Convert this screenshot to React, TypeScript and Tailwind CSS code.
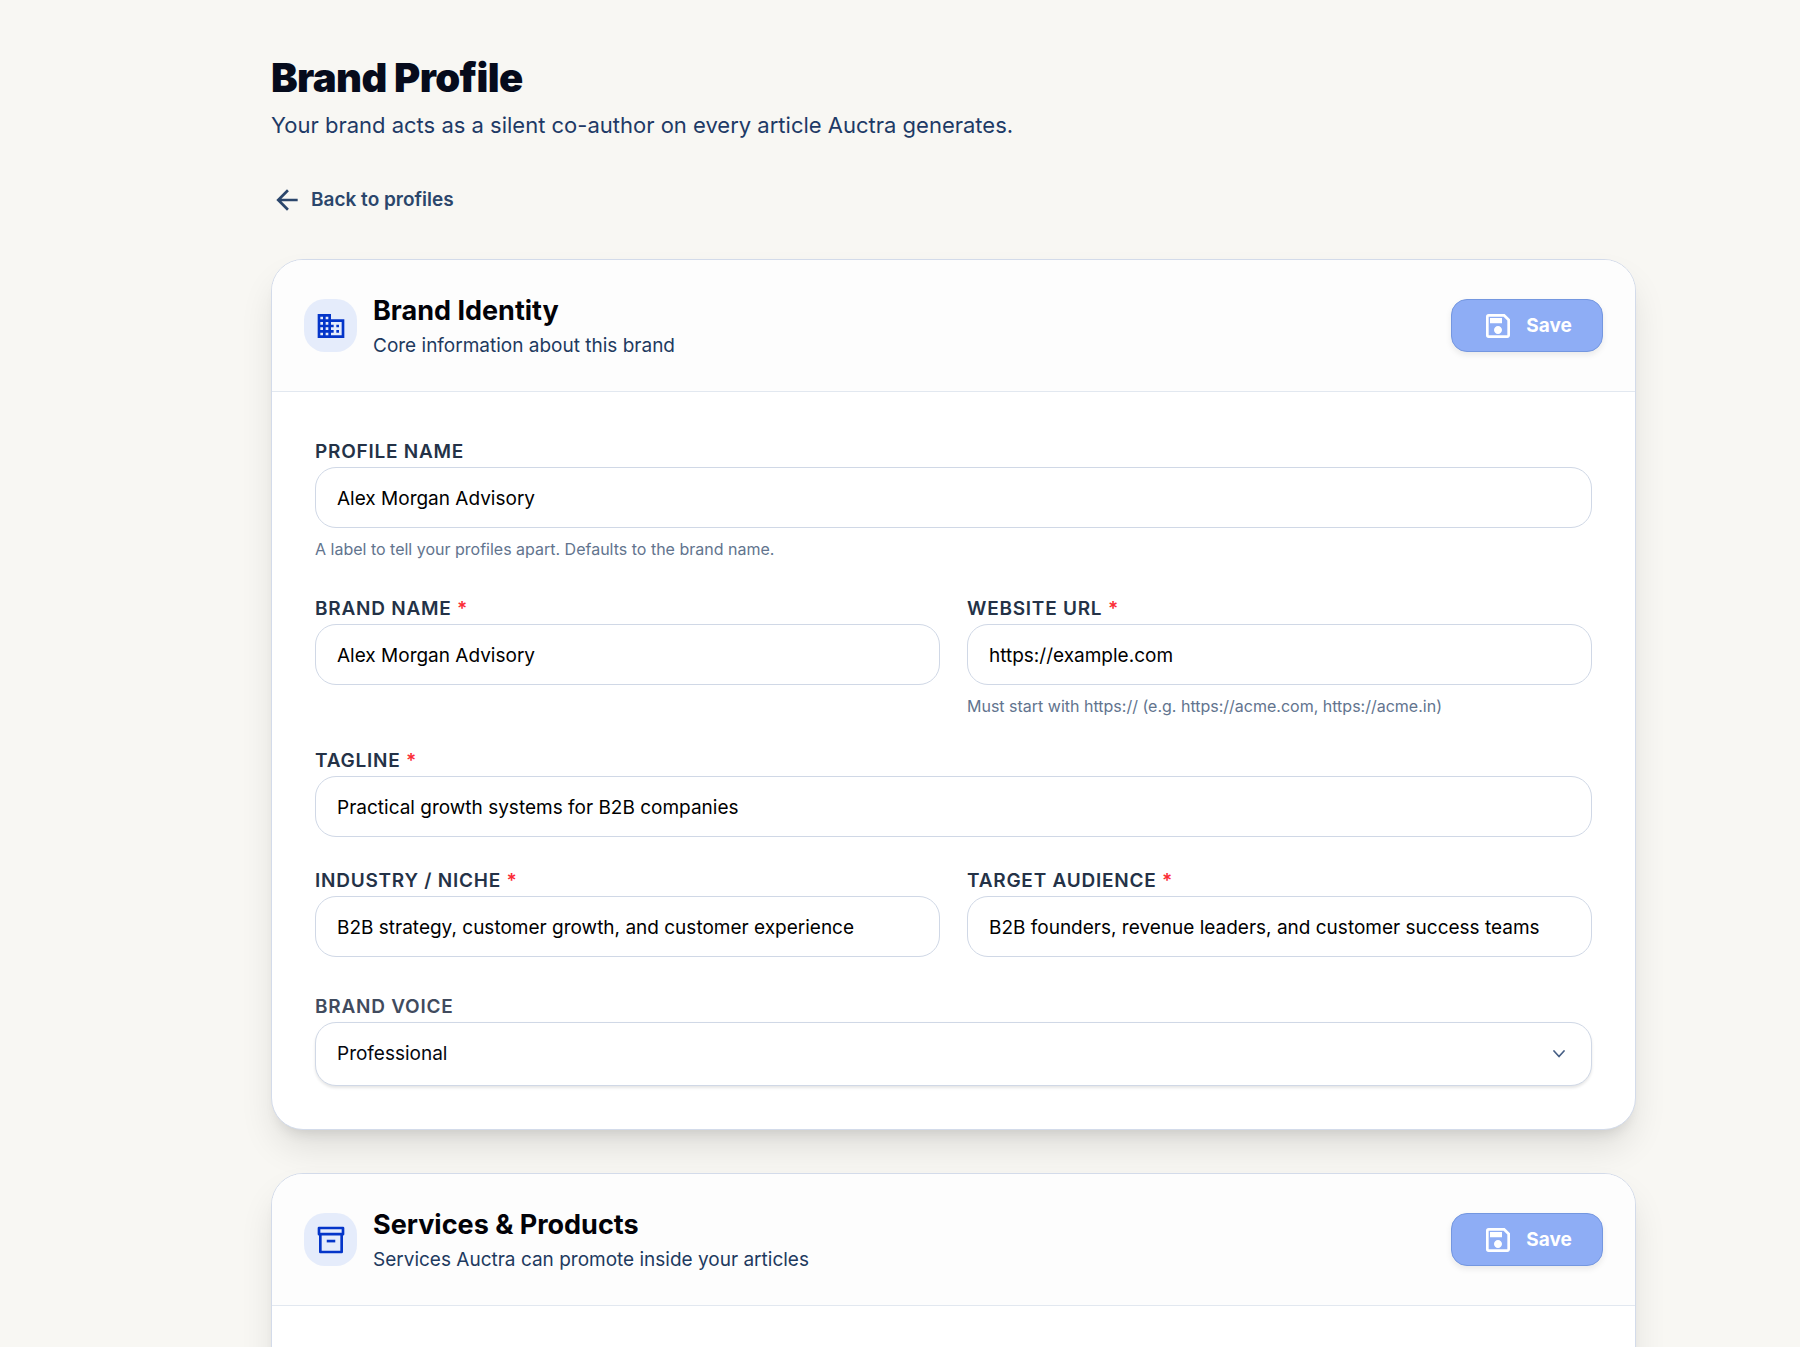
import type { ReactNode } from "react";
import { MdArrowBack, MdDomain, MdOutlineSave } from "react-icons/md";

type FieldProps = {
  id: string;
  label: string;
  value: string;
  required?: boolean;
  hint?: string;
  type?: string;
};

function Field({ id, label, value, required, hint, type = "text" }: FieldProps) {
  return (
    <div>
      <label htmlFor={id} className="block pt-0.5 text-[19px] leading-[30px] font-semibold tracking-[0.04em] text-[#243247] uppercase">
        {label}
        {required && <span className="text-red-500"> *</span>}
      </label>
      <input
        id={id}
        type={type}
        defaultValue={value}
        aria-describedby={hint ? `${id}-hint` : undefined}
        className="block h-[61px] w-full rounded-[21px] border border-[#d0d8e6] bg-white px-[21px] pt-px text-[19px] text-black outline-none focus:border-blue-500"
      />
      {hint && (
        <p id={`${id}-hint`} className="mt-2 text-[16px] leading-[26px] text-slate-500">
          {hint}
        </p>
      )}
    </div>
  );
}

function ArchiveIcon() {
  return (
    <svg viewBox="0 0 24 24" aria-hidden="true" className="size-8 fill-none stroke-current">
      <path d="M3 3h18v4.6H3zM4 7.6V21h16V7.6" strokeWidth="2" strokeLinejoin="round" />
      <path d="M8.8 12.8h6.4" strokeWidth="2" />
    </svg>
  );
}

type SectionProps = {
  icon: ReactNode;
  title: string;
  description: string;
  children?: ReactNode;
};

function Section({ icon, title, description, children }: SectionProps) {
  return (
    <section className="rounded-[32px] border border-[#d3dbea] bg-white shadow-[0_20px_36px_-4px_rgba(0,0,0,0.11),0_10px_13px_-7px_rgba(0,0,0,0.1)]">
      <header className="flex items-center justify-between rounded-t-[31px] border-b border-slate-200 bg-[#fdfdfd] px-8 py-7">
        <div className="flex items-center gap-4">
          <span className="flex size-[53px] items-center justify-center rounded-[21px] bg-[#e5ecfb] text-[#0435c9]">
            {icon}
          </span>
          <div className="pt-[7px]">
            <h2 className="text-[27px] leading-8 font-bold text-[#020208]">{title}</h2>
            <p className="pt-0.5 text-[19px] leading-[34px] text-[#1e3a5f]">{description}</p>
          </div>
        </div>
        <button
          type="button"
          className="flex h-[53px] w-[152px] items-center justify-center gap-3 rounded-2xl border border-[#7497e0] bg-[#8eadf5] text-[19px] font-bold text-white shadow-[0_3px_6px_rgba(0,0,0,0.08)]"
        >
          <MdOutlineSave className="size-8" />
          <span className="pt-px">Save</span>
        </button>
      </header>
      {children}
    </section>
  );
}

export default function App() {
  return (
    <div className="h-screen overflow-hidden bg-[#f8f7f3] pt-[54px] pr-[164px] pl-[271px] font-['Inter',sans-serif]">
      <h1 className="text-[40px] leading-[48px] font-black tracking-[-0.6px] text-[#060b1c]">Brand Profile</h1>
      <p className="mt-1.5 text-[22px] leading-[34px] text-[#1e3a66]">
        Your brand acts as a silent co-author on every article Auctra generates.
      </p>
      <a href="#profiles" className="mt-[42px] flex w-fit items-center gap-2 text-[19px] leading-8 font-semibold text-[#2b466b]">
        <MdArrowBack className="size-8" />
        Back to profiles
      </a>

      <main className="mt-[43px] flex flex-col gap-[43px]">
        <Section icon={<MdDomain className="size-8" />} title="Brand Identity" description="Core information about this brand">
          <div className="px-[43px] pt-[43px] pb-[43px]">
            <Field
              id="profile-name"
              label="Profile name"
              value="Alex Morgan Advisory"
              hint="A label to tell your profiles apart. Defaults to the brand name."
            />
            <div className="mt-[30px] grid grid-cols-2 gap-[27px]">
              <Field id="brand-name" label="Brand name" value="Alex Morgan Advisory" required />
              <Field
                id="website"
                label="Website URL"
                type="url"
                value="https://example.com"
                required
                hint="Must start with https:// (e.g. https://acme.com, https://acme.in)"
              />
            </div>
            <div className="mt-[25px]">
              <Field id="tagline" label="Tagline" value="Practical growth systems for B2B companies" required />
            </div>
            <div className="mt-[27px] grid grid-cols-2 gap-[27px]">
              <Field
                id="industry"
                label="Industry / Niche"
                value="B2B strategy, customer growth, and customer experience"
                required
              />
              <Field
                id="audience"
                label="Target audience"
                value="B2B founders, revenue leaders, and customer success teams"
                required
              />
            </div>
            <div className="mt-[33px]">
              <label
                htmlFor="voice"
                className="block pt-0.5 text-[19px] leading-[30px] font-semibold tracking-[0.04em] text-[#414b5e] uppercase"
              >
                Brand voice
              </label>
              <div className="relative">
                <select
                  id="voice"
                  defaultValue="Professional"
                  className="block h-16 w-full appearance-none rounded-[21px] border border-[#d0d8e6] bg-white px-[21px] text-[19px] text-[#05070f] shadow-[0_2px_3px_rgba(0,0,0,0.1)] outline-none"
                >
                  <option>Professional</option>
                  <option>Conversational</option>
                  <option>Authoritative</option>
                </select>
                <svg
                  viewBox="0 0 12 8"
                  aria-hidden="true"
                  className="pointer-events-none absolute top-7 right-[27px] h-2 w-3 fill-none stroke-[#475f85]"
                >
                  <path d="M1 1l5 5.5L11 1" strokeWidth="1.7" strokeLinecap="round" strokeLinejoin="round" />
                </svg>
              </div>
            </div>
          </div>
        </Section>

        <Section
          icon={<ArchiveIcon />}
          title="Services & Products"
          description="Services Auctra can promote inside your articles"
        >
          <div className="h-64" />
        </Section>
      </main>
    </div>
  );
}
